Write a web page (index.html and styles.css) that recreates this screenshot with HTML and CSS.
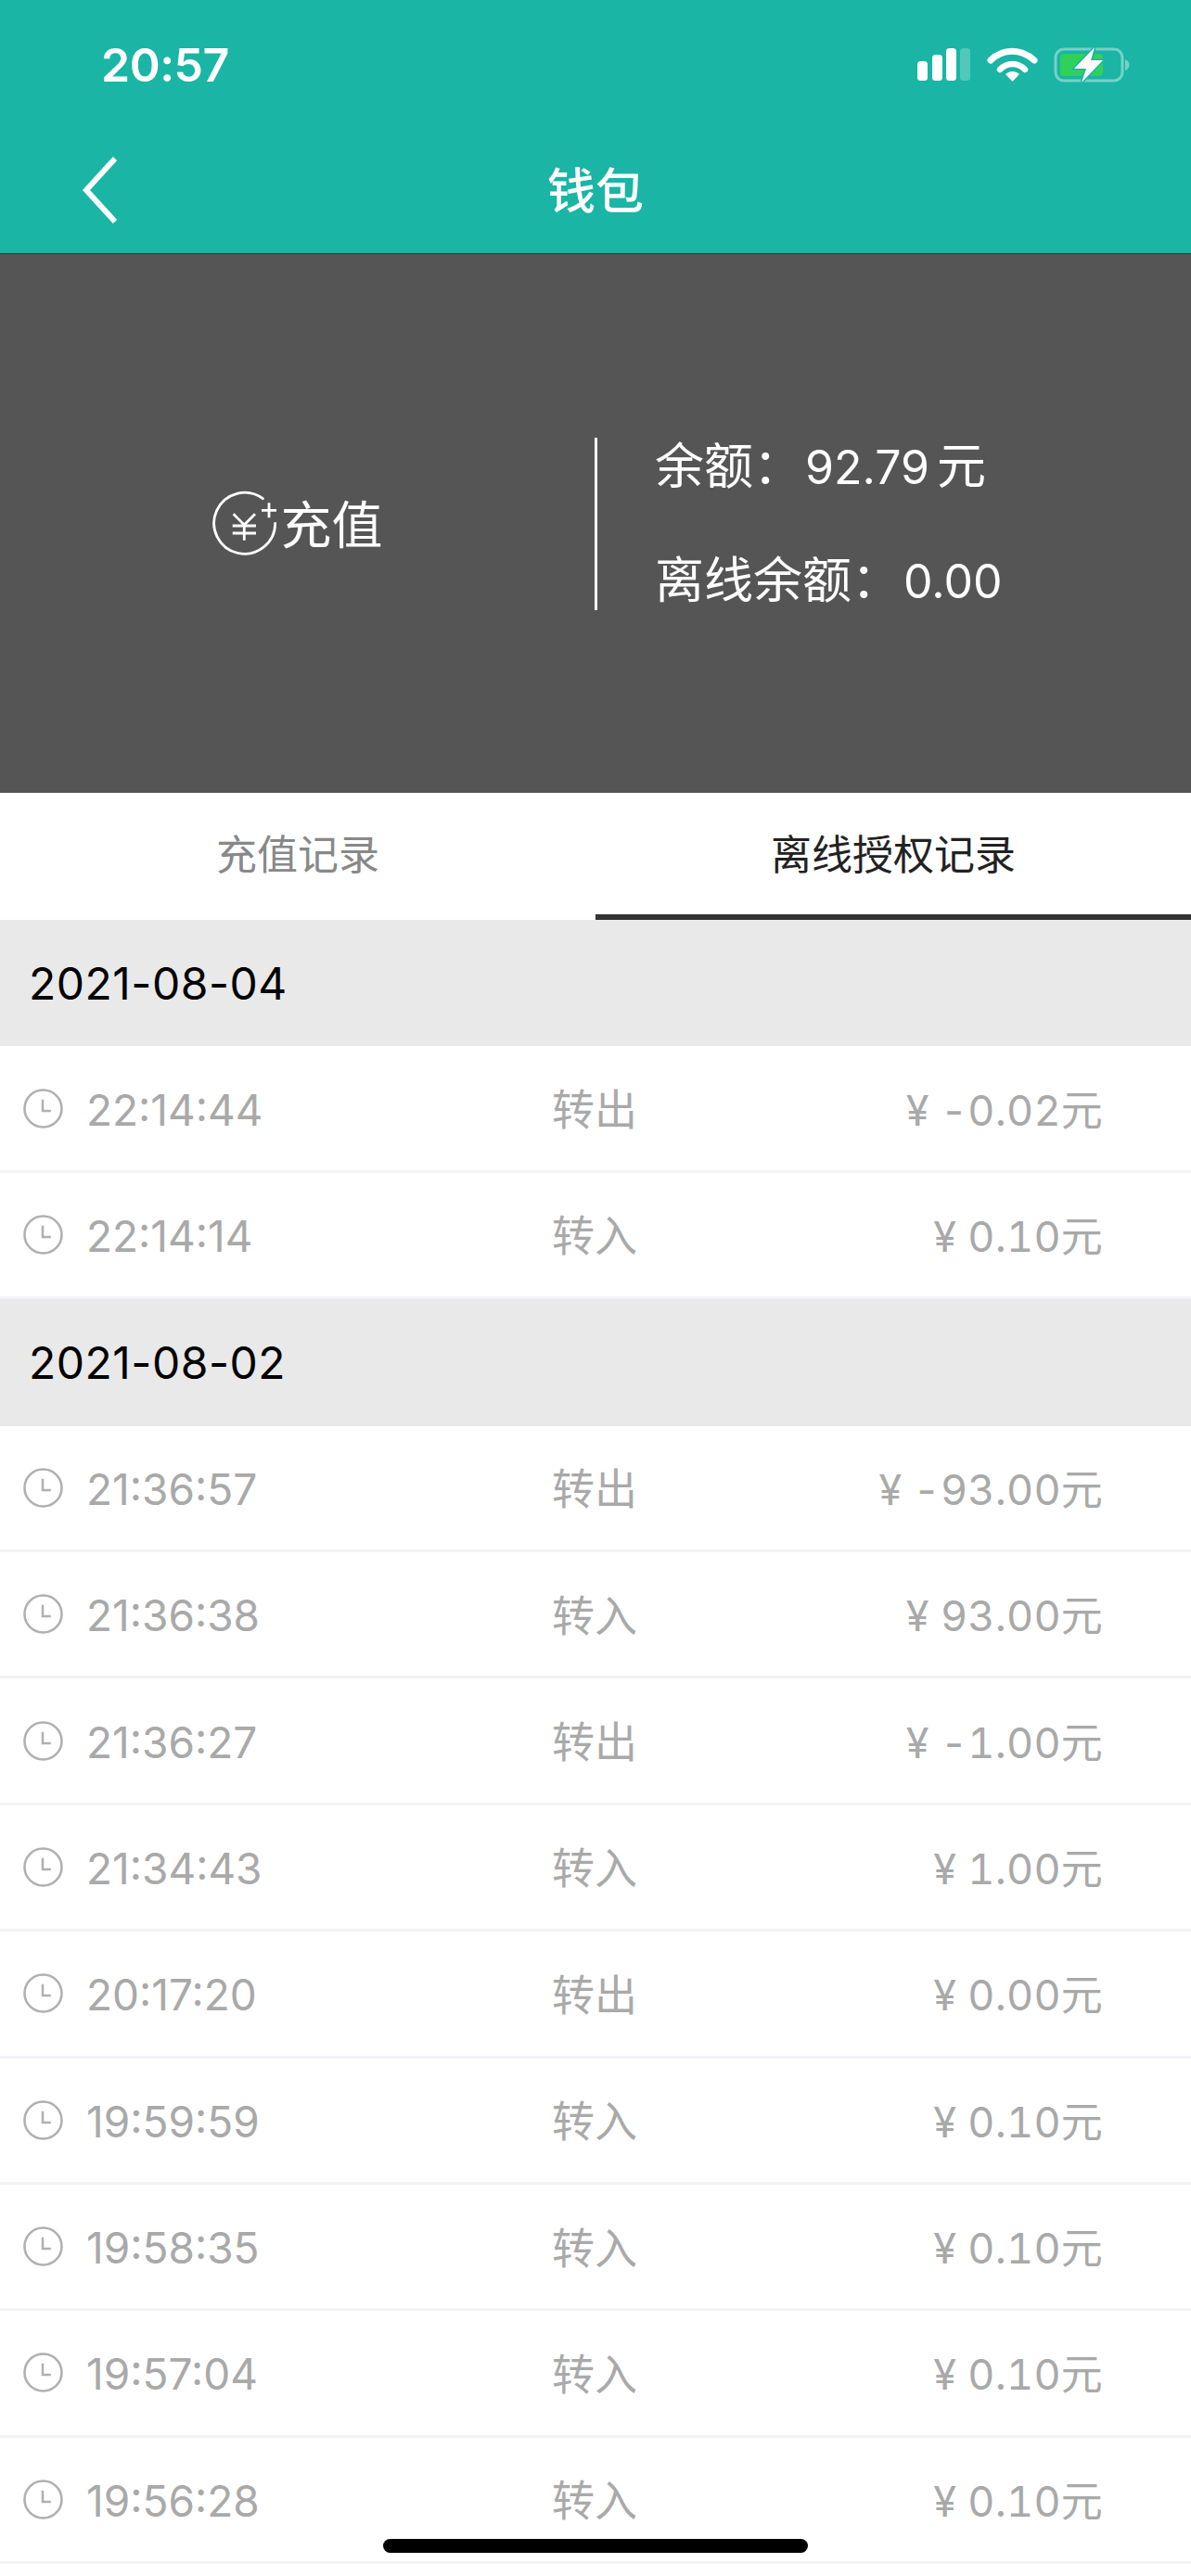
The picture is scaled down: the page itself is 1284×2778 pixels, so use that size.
FILE: index.html
```html
<!DOCTYPE html>
<html>
<head>
<title>钱包</title>
<link rel="stylesheet" href="styles.css">
</head>
<body>

<svg class="defs" width="0" height="0">
    <symbol id="clock" viewBox="0 0 44 44">
        <circle cx="22" cy="22" r="20.5" fill="none" stroke="currentColor" stroke-width="2.6"/>
        <path d="M21.500 12v12.500h9" fill="none" stroke="currentColor" stroke-width="2.6"/>
    </symbol>
</svg>

<div class="page">
    <!-- Top bar -->
    <div class="header">
        <div class="status-bar">
            <span class="status-time">20:57</span>
            <svg class="status-icons" width="230" height="38" viewBox="0 0 230 38">
                <rect x="0" y="15" width="11" height="21" rx="3.5" fill="#fff"/>
                <rect x="16" y="8" width="11" height="28" rx="3.5" fill="#fff"/>
                <rect x="31" y="1" width="11" height="35" rx="3.5" fill="#fff"/>
                <rect x="46" y="1" width="11" height="35" rx="3.5" fill="#fff" opacity="0.25"/>
                <path d="M79 14C92 1 112 1 126 14" fill="none" stroke="#fff" stroke-width="7" stroke-linecap="round"/>
                <path d="M89 24C97 16 108 16 116 24" fill="none" stroke="#fff" stroke-width="6.5" stroke-linecap="round"/>
                <path d="M95 29C100 25 105 25 110 29L102.500 37Z" fill="#fff"/>
                <rect x="149" y="2" width="72" height="34" rx="9" fill="none" stroke="#fff" stroke-opacity="0.4" stroke-width="3"/>
                <path d="M224 13c3 1 4.500 3.500 4.500 6s-1.500 5-4.500 6z" fill="#fff" opacity="0.4"/>
                <rect x="154" y="7" width="46" height="24" rx="4" fill="#30d158"/>
                <path d="M191 0L169 23H182L177 38L200 14H187Z" fill="#fff" stroke="#1ab5a4" stroke-width="3" paint-order="stroke"/>
            </svg>
        </div>
        <div class="nav-bar">
            <svg class="back-icon" width="40" height="72" viewBox="0 0 40 72">
                <path d="M36 2L5 36L36 70" fill="none" stroke="#fff" stroke-width="6"/>
            </svg>
            <span class="nav-title">钱包</span>
        </div>
    </div>

    <!-- Balance panel -->
    <div class="wallet">
        <div class="recharge">
            <svg class="recharge-icon" width="72" height="72" viewBox="0 0 72 72">
                <path d="M55.300 8.700A33 33 0 1 0 68.700 35.300" fill="none" stroke="#fff" stroke-width="2.800" stroke-linecap="round"/>
                <path d="M62 13.300v16M54 21.300h16" fill="none" stroke="#fff" stroke-width="2.800"/>
                <path d="M23.700 25.300L35.300 37L47 25.300M22.700 38H48M22.700 46H48M35.300 37V53.700" fill="none" stroke="#fff" stroke-width="2.800"/>
            </svg>
            <span class="recharge-text">充值</span>
        </div>
        <div class="balance">
            <div class="balance-line">余额：<span class="balance-num">92.79</span>元</div>
            <div class="balance-line">离线余额：<span class="balance-num">0.00</span></div>
        </div>
    </div>

    <!-- Tabs -->
    <div class="tabs">
        <div class="tab">充值记录</div>
        <div class="tab active">离线授权记录</div>
    </div>

    <!-- Records -->
    <div class="date-row">2021-08-04</div>
    <div class="record">
        <span class="record-time"><svg class="clock"><use href="#clock"/></svg>22:14:44</span>
        <span class="record-type">转出</span>
        <span class="record-amount">¥ -0.02元</span>
    </div>
    <div class="record">
        <span class="record-time"><svg class="clock"><use href="#clock"/></svg>22:14:14</span>
        <span class="record-type">转入</span>
        <span class="record-amount">¥ 0.10元</span>
    </div>

    <div class="date-row">2021-08-02</div>
    <div class="record">
        <span class="record-time"><svg class="clock"><use href="#clock"/></svg>21:36:57</span>
        <span class="record-type">转出</span>
        <span class="record-amount">¥ -93.00元</span>
    </div>
    <div class="record">
        <span class="record-time"><svg class="clock"><use href="#clock"/></svg>21:36:38</span>
        <span class="record-type">转入</span>
        <span class="record-amount">¥ 93.00元</span>
    </div>
    <div class="record">
        <span class="record-time"><svg class="clock"><use href="#clock"/></svg>21:36:27</span>
        <span class="record-type">转出</span>
        <span class="record-amount">¥ -1.00元</span>
    </div>
    <div class="record">
        <span class="record-time"><svg class="clock"><use href="#clock"/></svg>21:34:43</span>
        <span class="record-type">转入</span>
        <span class="record-amount">¥ 1.00元</span>
    </div>
    <div class="record">
        <span class="record-time"><svg class="clock"><use href="#clock"/></svg>20:17:20</span>
        <span class="record-type">转出</span>
        <span class="record-amount">¥ 0.00元</span>
    </div>
    <div class="record">
        <span class="record-time"><svg class="clock"><use href="#clock"/></svg>19:59:59</span>
        <span class="record-type">转入</span>
        <span class="record-amount">¥ 0.10元</span>
    </div>
    <div class="record">
        <span class="record-time"><svg class="clock"><use href="#clock"/></svg>19:58:35</span>
        <span class="record-type">转入</span>
        <span class="record-amount">¥ 0.10元</span>
    </div>
    <div class="record">
        <span class="record-time"><svg class="clock"><use href="#clock"/></svg>19:57:04</span>
        <span class="record-type">转入</span>
        <span class="record-amount">¥ 0.10元</span>
    </div>
    <div class="record">
        <span class="record-time"><svg class="clock"><use href="#clock"/></svg>19:56:28</span>
        <span class="record-type">转入</span>
        <span class="record-amount">¥ 0.10元</span>
    </div>

    <div class="home-bar"></div>
</div>

</body>
</html>
```

FILE: styles.css
```css
:root {
    --teal: #1ab5a4;
    --panel: #555555;
    --date-bg: #e9e9e9;
    --line: #f2f2f7;
    --muted: #a9a9a9;
}

html, body {
    margin: 0;
    background: #fff;
}

body {
    font-family: Inter, "Noto Sans CJK SC", sans-serif;
    overflow: hidden;
}

.defs {
    position: absolute;
}

.page {
    position: relative;
    height: 2778px;
    overflow: hidden;
}

.header {
    background: var(--teal);
    height: 273px;
    color: #fff;
}

.status-bar {
    display: flex;
    align-items: center;
    justify-content: space-between;
    height: 137px;
    padding: 3px 65px 0 109px;
    box-sizing: border-box;
}

.status-time {
    font-size: 50px;
    font-weight: 600;
    letter-spacing: -0.5px;
}

.nav-bar {
    display: flex;
    align-items: center;
    justify-content: center;
    position: relative;
    height: 136px;
}

.back-icon {
    position: absolute;
    left: 88px;
    top: 32px;
}

.nav-title {
    font-size: 52px;
    font-weight: 500;
    padding-bottom: 6px;
}

.wallet {
    display: flex;
    align-items: center;
    height: 581px;
    background: var(--panel);
    border-top: 1px solid #333;
    color: #fff;
}

.recharge {
    display: flex;
    align-items: center;
    justify-content: center;
    gap: 2px;
    width: 641px;
    font-size: 55px;
}

.recharge-text {
    padding-bottom: 6px;
}

.balance {
    display: flex;
    flex-direction: column;
    justify-content: center;
    gap: 47px;
    height: 186px;
    padding-left: 62px;
    border-left: 3px solid #fff;
    font-size: 53px;
}

.balance-line {
    line-height: 75px;
}

.balance-line:first-child {
    padding-top: 2px;
}

.balance-num {
    font-size: 50px;
    margin: 0 8px 0 3px;
}

.tabs {
    display: flex;
    height: 137px;
    background: #fff;
}

.tab {
    flex: 1;
    display: flex;
    align-items: center;
    justify-content: center;
    box-sizing: border-box;
    padding-bottom: 4px;
    border-bottom: 6px solid transparent;
    font-size: 44px;
    color: #888;
}

.tab.active {
    border-bottom-color: #333;
    color: #222;
}

.date-row {
    display: flex;
    align-items: center;
    height: 136.400px;
    padding-left: 31px;
    box-sizing: border-box;
    background: var(--date-bg);
    font-size: 48px;
    letter-spacing: 0.5px;
    color: #000;
}

.record {
    display: grid;
    grid-template-columns: 570px auto 1fr;
    align-items: center;
    height: 136.400px;
    padding: 0 95px 0 25px;
    box-sizing: border-box;
    border-bottom: 3px solid var(--line);
    font-size: 46px;
    color: var(--muted);
}

.record-time {
    display: flex;
    align-items: center;
    gap: 25px;
    padding-top: 3px;
    font-size: 46px;
}

.clock {
    width: 43px;
    height: 43px;
    margin-top: -3px;
    color: #b0b0b0;
}

.record-type {
    padding-bottom: 4px;
}

.record-amount {
    padding-bottom: 2px;
    text-align: right;
    font-size: 45px;
    font-feature-settings: "tnum";
    letter-spacing: 0.2px;
}

.home-bar {
    position: absolute;
    left: 413px;
    top: 2738px;
    width: 458px;
    height: 15px;
    border-radius: 8px;
    background: #000;
}
```
